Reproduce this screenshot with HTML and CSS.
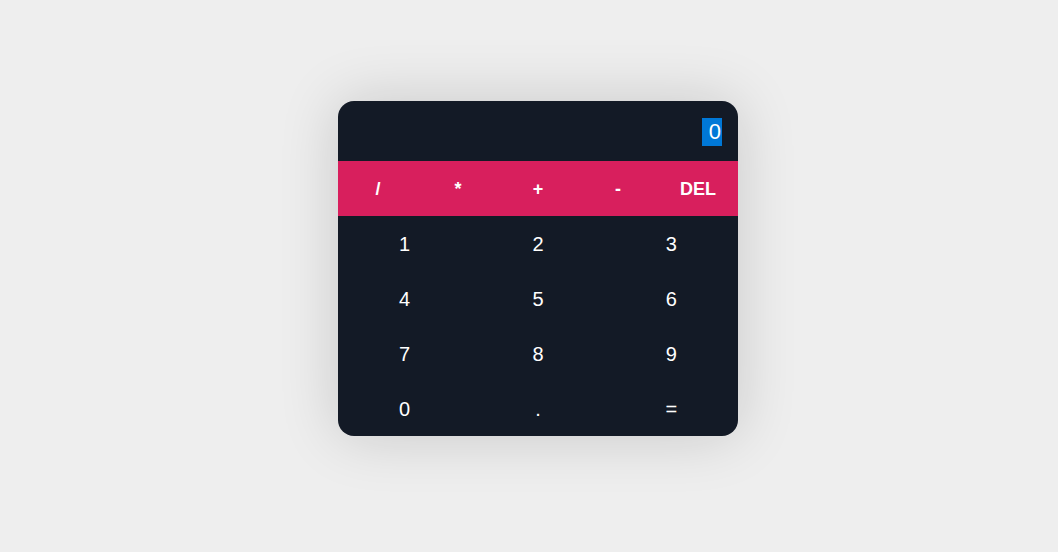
FILE: index.html
```html
<!DOCTYPE html>
<html lang="en">
<head>
<meta charset="utf-8">
<title>Calculator</title>
<link rel="stylesheet" href="styles.css">
</head>
<body>
<div class="page">
  <div class="calc">
    <div class="display"><span class="value">0</span></div>
    <div class="ops">
      <button class="key op">/</button>
      <button class="key op">*</button>
      <button class="key op">+</button>
      <button class="key op">-</button>
      <button class="key op">DEL</button>
    </div>
    <div class="digits">
      <button class="key">1</button>
      <button class="key">2</button>
      <button class="key">3</button>
      <button class="key">4</button>
      <button class="key">5</button>
      <button class="key">6</button>
      <button class="key">7</button>
      <button class="key">8</button>
      <button class="key">9</button>
      <button class="key">0</button>
      <button class="key">.</button>
      <button class="key">=</button>
    </div>
  </div>
</div>
</body>
</html>
```
FILE: styles.css
```css
html, body {
  margin: 0;
  padding: 0;
  background: #eeeeee;
  font-family: "Liberation Sans", Arial, sans-serif;
}
.page {
  box-sizing: border-box;
  min-height: 100vh;
  padding: 101px 0 0 338px;
}
.calc {
  width: 400px;
  background: #131a26;
  border-radius: 16px;
  overflow: hidden;
  box-shadow: 0 0 60px rgba(0, 0, 0, 0.16);
}
.display {
  height: 60px;
  display: flex;
  align-items: center;
  justify-content: flex-end;
  padding-right: 16px;
  color: #ffffff;
  font-size: 22px;
}
.value {
  background: #0078d7;
  line-height: 28px;
  padding: 0 1px 0 7px;
  margin-top: 2px;
}
.ops {
  display: grid;
  grid-template-columns: repeat(5, 1fr);
  background: #d81f5d;
}
.digits {
  display: grid;
  grid-template-columns: repeat(3, 1fr);
}
.key {
  height: 55px;
  border: 0;
  background: transparent;
  color: #ffffff;
  font-family: "Liberation Sans", Arial, sans-serif;
  font-size: 20px;
  padding: 2px 0 0;
  margin: 0;
}
.op {
  font-size: 18px;
  font-weight: bold;
}
```
